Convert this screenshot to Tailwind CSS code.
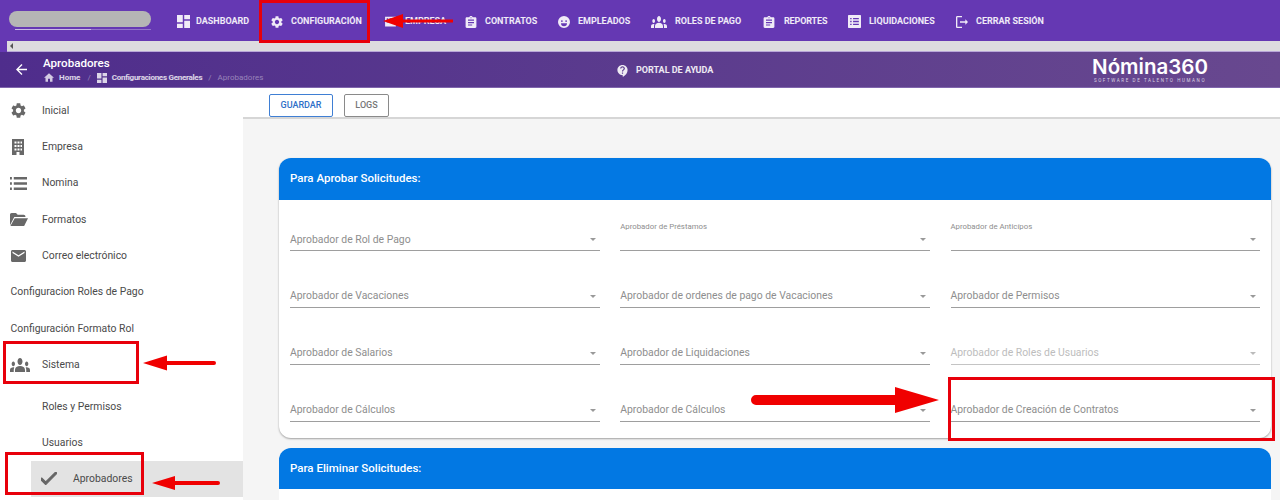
<!DOCTYPE html>
<html lang="es">
<head>
    <meta charset="UTF-8">
    <title>Aprobadores</title>
    <script src="https://cdn.jsdelivr.net/npm/@tailwindcss/browser@4"></script>
</head>
<body class="relative w-[1280px] h-[500px] overflow-hidden bg-white font-['Roboto',sans-serif] text-[#4a4a4a]">

    <!-- top nav -->
    <nav class="flex items-center h-[41px] pt-[2px] bg-[#6538b3] text-white/90 text-[9px] font-bold">
        <div class="w-[177px] pl-[9px] shrink-0 -mt-[2px]">
            <div class="w-[142px] h-[16px] rounded-full bg-[#b5b5b5]"></div>
            <div class="ml-[6px] w-[136px] h-px mt-[2px] bg-white/30"><div class="w-[76px] h-px bg-white/50"></div></div>
        </div>
        <a class="flex items-center gap-[6px] w-[94px] shrink-0"><svg class="w-[13px] h-[13px]" viewBox="3 3 18 18" fill="currentColor"><path d="M3 13h8V3H3v10zm0 8h8v-6H3v6zm10 0h8V11h-8v10zm0-18v6h8V3h-8z"/></svg>DASHBOARD</a>
        <a class="flex items-center gap-[8px] w-[113px] shrink-0"><svg class="w-[12px] h-[12px]" viewBox="2 2 20 20" fill="currentColor"><path d="M19.14 12.94c.04-.3.06-.61.06-.94 0-.32-.02-.64-.07-.94l2.03-1.58c.18-.14.23-.41.12-.61l-1.92-3.32c-.12-.22-.37-.29-.59-.22l-2.39.96c-.5-.38-1.03-.7-1.62-.94l-.36-2.54c-.04-.24-.24-.41-.48-.41h-3.84c-.24 0-.43.17-.47.41l-.36 2.54c-.59.24-1.13.57-1.62.94l-2.39-.96c-.22-.08-.47 0-.59.22L2.74 8.87c-.12.21-.08.47.12.61l2.03 1.58c-.05.3-.09.63-.09.94s.02.64.07.94l-2.03 1.58c-.18.14-.23.41-.12.61l1.92 3.32c.12.22.37.29.59.22l2.39-.96c.5.38 1.03.7 1.62.94l.36 2.54c.05.24.24.41.48.41h3.84c.24 0 .44-.17.47-.41l.36-2.54c.59-.24 1.13-.56 1.62-.94l2.39.96c.22.08.47 0 .59-.22l1.92-3.32c.12-.22.07-.47-.12-.61l-2.01-1.58zM12 15.6c-1.98 0-3.6-1.62-3.6-3.6s1.62-3.6 3.6-3.6 3.6 1.62 3.6 3.6-1.62 3.6-3.6 3.6z"/></svg>CONFIGURACIÓN</a>
        <a class="flex items-center gap-[8px] w-[81px] shrink-0"><svg class="w-[13px] h-[13px]" viewBox="0 0 24 24" fill="currentColor"><path fill-rule="evenodd" d="M2 3h20v18H2V3zm3 3v3h3V6H5zm5 0v3h3V6h-3zm5 0v3h4V6h-4zM5 11v3h3v-3H5zm5 0v3h3v-3h-3zm5 0v3h4v-3h-4z"/></svg>EMPRESA</a>
        <a class="flex items-center gap-[8px] w-[93px] shrink-0"><svg class="w-[12px] h-[12px]" viewBox="3 1 18 20" fill="currentColor"><path d="M19 3h-4.18C14.4 1.84 13.3 1 12 1c-1.3 0-2.4.84-2.82 2H5c-1.1 0-2 .9-2 2v14c0 1.1.9 2 2 2h14c1.1 0 2-.9 2-2V5c0-1.1-.9-2-2-2zm-7 0c.55 0 1 .45 1 1s-.45 1-1 1-1-.45-1-1 .45-1 1-1zm2 14H7v-2h7v2zm3-4H7v-2h10v2zm0-4H7V7h10v2z"/></svg>CONTRATOS</a>
        <a class="flex items-center gap-[8px] w-[93px] shrink-0"><svg class="w-[12px] h-[12px]" viewBox="2 2 20 20" fill="currentColor"><path fill-rule="evenodd" d="M12 2a10 10 0 1 0 0 20 10 10 0 0 0 0-20zM8.500 9a1.500 1.500 0 1 1 0 3 1.500 1.500 0 0 1 0-3zm7 0a1.500 1.500 0 1 1 0 3 1.500 1.500 0 0 1 0-3zM7 14h10a5 5 0 0 1-10 0z"/></svg>EMPLEADOS</a>
        <a class="flex items-center gap-[8px] w-[112px] shrink-0"><svg class="w-[16px] h-[12px]" viewBox="0 6 24 12" preserveAspectRatio="none" fill="currentColor"><path d="M12 12.750c1.630 0 3.070.39 4.240.9 1.080.48 1.760 1.560 1.760 2.730V18H6v-1.610c0-1.180.68-2.260 1.760-2.730 1.170-.52 2.610-.91 4.240-.91zM4 13c1.100 0 2-.9 2-2s-.9-2-2-2-2 .9-2 2 .9 2 2 2zm1.130 1.100c-.37-.06-.74-.1-1.130-.1-.99 0-1.930.21-2.780.58C.48 14.900 0 15.620 0 16.430V18h4.500v-1.610c0-.83.23-1.610.63-2.290zM20 13c1.100 0 2-.9 2-2s-.9-2-2-2-2 .9-2 2 .9 2 2 2zm4 3.430c0-.81-.48-1.530-1.220-1.850-.85-.37-1.790-.58-2.780-.58-.39 0-.76.04-1.130.1.4.68.63 1.460.63 2.290V18H24v-1.570zM12 6c1.660 0 3 1.340 3 3s-1.340 3-3 3-3-1.340-3-3 1.340-3 3-3z"/></svg>ROLES DE PAGO</a>
        <a class="flex items-center gap-[9px] w-[85px] shrink-0"><svg class="w-[12px] h-[12px]" viewBox="3 1 18 20" fill="currentColor"><path d="M19 3h-4.18C14.4 1.84 13.3 1 12 1c-1.3 0-2.4.84-2.82 2H5c-1.1 0-2 .9-2 2v14c0 1.1.9 2 2 2h14c1.1 0 2-.9 2-2V5c0-1.1-.9-2-2-2zm-7 0c.55 0 1 .45 1 1s-.45 1-1 1-1-.45-1-1 .45-1 1-1zm2 14H7v-2h7v2zm3-4H7v-2h10v2zm0-4H7V7h10v2z"/></svg><span class="tracking-[-0.15px]">REPORTES</span></a>
        <a class="flex items-center gap-[8px] w-[108px] shrink-0"><svg class="w-[13px] h-[13px]" viewBox="3 3 18 18" fill="currentColor"><path fill-rule="evenodd" d="M4 3h16a1 1 0 0 1 1 1v16a1 1 0 0 1-1 1H4a1 1 0 0 1-1-1V4a1 1 0 0 1 1-1zm2 4v2h2V7H6zm4 0v2h8V7h-8zm-4 4v2h2v-2H6zm4 0v2h8v-2h-8zm-4 4v2h2v-2H6zm4 0v2h8v-2h-8z"/></svg>LIQUIDACIONES</a>
        <a class="flex items-center gap-[8px] shrink-0"><svg class="w-[12px] h-[12px]" viewBox="3 3 18 18" fill="currentColor"><path d="M5 5h7V3H5c-1.100 0-2 .9-2 2v14c0 1.100.9 2 2 2h7v-2H5V5zm16 7l-4-4v3H9v2h8v3l4-4z"/></svg>CERRAR SESIÓN</a>
    </nav>

    <!-- horizontal scrollbar of the nav -->
    <div class="flex h-[11px] bg-[#6538b3]">
        <div class="ml-[7px] flex-1 flex items-center pl-[3px] bg-[#dddcdf] border-b border-[#b9a7d8]">
            <div class="w-0 h-0 border-y-[3px] border-y-transparent border-r-[3px] border-r-[#555]"></div>
        </div>
    </div>

    <!-- page header -->
    <header class="relative flex items-center h-[36px] bg-gradient-to-r from-[#4f2d8c] to-[#68488f] text-white border-b border-[#8066ad]">
        <svg class="ml-[16px] w-[11px] h-[11px] shrink-0" viewBox="4 4 16 16" fill="currentColor"><path d="M20 11H7.83l5.59-5.59L12 4l-8 8 8 8 1.41-1.41L7.83 13H20v-2z"/></svg>
        <div class="ml-[16px] w-[574px] shrink-0">
            <div class="text-[11.600px] leading-[14px] font-medium">Aprobadores</div>
            <div class="flex items-center text-[8px] leading-[12px] font-bold mt-[2px]">
                <svg class="ml-[1px] w-[10px] h-[9px] mr-[5px] text-white/75" viewBox="2 3 20 17" fill="currentColor"><path d="M10 20v-6h4v6h5v-8h3L12 3 2 12h3v8z"/></svg>
                <span class="text-white/80">Home</span>
                <span class="ml-[7px] mr-[6px] font-normal text-white/40">/</span>
                <svg class="w-[10px] h-[10px] mr-[5px] text-white/80" viewBox="3 3 18 18" fill="currentColor"><path d="M3 13h8V3H3v10zm0 8h8v-6H3v6zm10 0h8V11h-8v10zm0-18v6h8V3h-8z"/></svg>
                <span class="text-white/80 tracking-[-0.27px]">Configuraciones Generales</span>
                <span class="mx-[6px] font-normal text-white/40">/</span>
                <span class="font-normal text-white/40">Aprobadores</span>
            </div>
        </div>
        <div class="flex items-center gap-[8px] pt-[2px] text-[9px] font-bold text-white/90">
            <svg class="w-[11px] h-[12px]" viewBox="3 2 17 20" fill="currentColor"><path d="M11.500 2C6.810 2 3 5.810 3 10.500S6.810 19 11.500 19h.5v3c4.860-2.340 8-7 8-11.500C20 5.810 16.190 2 11.500 2zm1 14.500h-2v-2h2v2zm0-3.500h-2c0-3.250 3-3 3-5 0-1.100-.9-2-2-2s-2 .9-2 2h-2c0-2.210 1.790-4 4-4s4 1.790 4 4c0 2.500-3 2.750-3 5z"/></svg>
            PORTAL DE AYUDA
        </div>
        <div class="ml-auto mr-[72px] w-[116px] text-center">
            <div class="font-['Inter',sans-serif] text-[20.500px] leading-[22px] font-semibold whitespace-nowrap">Nómina360</div>
            <div class="text-[4.500px] leading-[6px] tracking-[1.600px] whitespace-nowrap text-white/75">SOFTWARE DE TALENTO HUMANO</div>
        </div>
    </header>

    <div class="flex h-[412px]">
        <!-- sidebar -->
        <aside class="w-[243px] shrink-0 pt-[4.500px] text-[10.400px]">
            <div class="flex items-center h-[36.300px]"><span class="w-[42px] pl-[11px] shrink-0"><svg class="w-[15px] h-[15px] text-[#686868]" viewBox="2 2 20 20" fill="currentColor"><path d="M19.14 12.94c.04-.3.06-.61.06-.94 0-.32-.02-.64-.07-.94l2.03-1.58c.18-.14.23-.41.12-.61l-1.92-3.32c-.12-.22-.37-.29-.59-.22l-2.39.96c-.5-.38-1.03-.7-1.62-.94l-.36-2.54c-.04-.24-.24-.41-.48-.41h-3.84c-.24 0-.43.17-.47.41l-.36 2.54c-.59.24-1.13.57-1.62.94l-2.39-.96c-.22-.08-.47 0-.59.22L2.74 8.87c-.12.21-.08.47.12.61l2.03 1.58c-.05.3-.09.63-.09.94s.02.64.07.94l-2.03 1.58c-.18.14-.23.41-.12.61l1.92 3.32c.12.22.37.29.59.22l2.39-.96c.5.38 1.03.7 1.62.94l.36 2.54c.05.24.24.41.48.41h3.84c.24 0 .44-.17.47-.41l.36-2.54c.59-.24 1.13-.56 1.62-.94l2.39.96c.22.08.47 0 .59-.22l1.92-3.32c.12-.22.07-.47-.12-.61l-2.01-1.58zM12 15.6c-1.98 0-3.6-1.62-3.6-3.6s1.62-3.6 3.6-3.6 3.6 1.62 3.6 3.6-1.62 3.6-3.6 3.6z"/></svg></span>Inicial</div>
            <div class="flex items-center h-[36.300px]"><span class="w-[42px] pl-[11px] shrink-0"><svg class="w-[14px] h-[16px] text-[#686868]" viewBox="0 0 14 16" fill="currentColor"><path fill-rule="evenodd" d="M1 0h12v16H8.500v-3h-3v3H1V0zm2.500 2.500v2h2v-2h-2zm3 0v2h2v-2h-2zm3 0v2h1.500v-2H9.500zM3.500 6v2h2V6h-2zm3 0v2h2V6h-2zm3 0v2h1.500V6H9.500zM3.500 9.500v2h2v-2h-2zm3 0v2h2v-2h-2zm3 0v2h1.500v-2H9.500z"/></svg></span>Empresa</div>
            <div class="flex items-center h-[36.300px]"><span class="w-[42px] pl-[10px] shrink-0"><svg class="w-[17px] h-[13px] text-[#686868]" viewBox="3 7 18 10" preserveAspectRatio="none" fill="currentColor"><path d="M3 13h2v-2H3v2zm0 4h2v-2H3v2zm0-8h2V7H3v2zm4 4h14v-2H7v2zm0 4h14v-2H7v2zM7 7v2h14V7H7z"/></svg></span>Nomina</div>
            <div class="flex items-center h-[36.300px]"><span class="w-[42px] pl-[10px] shrink-0"><svg class="w-[18px] h-[13px] text-[#686868]" viewBox="2 4 21 16" preserveAspectRatio="none" fill="currentColor"><path d="M2 19V6c0-1 .7-2 2-2h5l2 2h7c1 0 2 1 2 2v1H7l-5 10zm.5 1l5-9.500H23L18.500 20H2.500z"/></svg></span>Formatos</div>
            <div class="flex items-center h-[36.300px]"><span class="w-[42px] pl-[11px] shrink-0"><svg class="w-[15px] h-[12px] text-[#686868]" viewBox="2 4 20 16" preserveAspectRatio="none" fill="currentColor"><path d="M20 4H4c-1.100 0-1.990.9-1.990 2L2 18c0 1.100.9 2 2 2h16c1.100 0 2-.9 2-2V6c0-1.100-.9-2-2-2zm0 4l-8 5-8-5V6l8 5 8-5v2z"/></svg></span>Correo electrónico</div>
            <div class="flex items-center h-[36.300px] pl-[10.500px]">Configuracion Roles de Pago</div>
            <div class="flex items-center h-[36.300px] pl-[10.500px]">Configuración Formato Rol</div>
            <div class="flex items-center h-[36.300px]"><span class="w-[42px] pl-[10px] shrink-0"><svg class="w-[20px] h-[14px] text-[#686868]" viewBox="0 6 24 12" preserveAspectRatio="none" fill="currentColor"><path d="M12 12.750c1.630 0 3.070.39 4.240.9 1.080.48 1.760 1.560 1.760 2.730V18H6v-1.610c0-1.180.68-2.260 1.760-2.730 1.170-.52 2.610-.91 4.240-.91zM4 13c1.100 0 2-.9 2-2s-.9-2-2-2-2 .9-2 2 .9 2 2 2zm1.130 1.100c-.37-.06-.74-.1-1.130-.1-.99 0-1.930.21-2.780.58C.48 14.900 0 15.620 0 16.430V18h4.500v-1.610c0-.83.23-1.610.63-2.290zM20 13c1.100 0 2-.9 2-2s-.9-2-2-2-2 .9-2 2 .9 2 2 2zm4 3.430c0-.81-.48-1.530-1.220-1.850-.85-.37-1.790-.58-2.780-.58-.39 0-.76.04-1.130.1.4.68.63 1.460.63 2.290V18H24v-1.570zM12 6c1.660 0 3 1.340 3 3s-1.340 3-3 3-3-1.340-3-3 1.340-3 3-3z"/></svg></span>Sistema</div>
            <div class="flex items-center h-[36px] mt-[6px] pl-[42px]">Roles y Permisos</div>
            <div class="flex items-center h-[36px] pl-[42px]">Usuarios</div>
            <div class="flex items-center h-[36px] ml-[31px] bg-[#e3e3e3]"><svg class="ml-[10px] w-[16px] h-[13px] text-[#666]" viewBox="4 6 17 13" fill="currentColor"><path d="M9 16.200L4.800 12l-1.400 1.400L9 19 21 7l-1.400-1.400L9 16.200z" stroke="currentColor" stroke-width="1.200"/></svg><span class="ml-[16px]">Aprobadores</span></div>
        </aside>

        <!-- content -->
        <main class="flex-1 flex flex-col min-w-0">
            <div class="flex items-start gap-[11px] h-[35px] pt-[6px] pl-[26px] bg-white border-b-2 border-[#d6d6d6] text-[9px] font-medium">
                <button class="w-[64px] h-[23px] rounded-[2px] border border-[#3f7fd4] text-[#2f6fc8]">GUARDAR</button>
                <button class="w-[45px] h-[23px] rounded-[2px] border border-[#8a8a8a] text-[#777]">LOGS</button>
            </div>
            <div class="flex-1 bg-[#f5f5f5] pt-[39px] pl-[36px] pr-[9px]">
                <section class="rounded-[12px] bg-white shadow-[0_1px_2px_rgba(0,0,0,0.35)]">
                    <h2 class="flex items-center h-[42px] pl-[11px] rounded-t-[12px] bg-[#0278e3] text-white text-[11.500px] font-medium">Para Aprobar Solicitudes:</h2>
                    <div class="grid grid-cols-3 gap-x-[20.750px] grid-rows-[51px_57px_57px_57px] px-[11px] pb-[16px] text-[10.400px] text-[#8e8e8e]">
                        <div class="flex items-end border-b border-[#9e9e9e]"><span class="flex-1 pb-[2px]">Aprobador de Rol de Pago</span><i class="mr-[4px] mb-[9px] border-x-[3.500px] border-t-[3.500px] border-x-transparent border-t-[#999]"></i></div>
                        <div class="flex items-end border-b border-[#9e9e9e] relative"><span class="absolute left-0 top-[22px] text-[7.800px] leading-[9px]">Aprobador de Préstamos</span><span class="flex-1"></span><i class="mr-[4px] mb-[9px] border-x-[3.500px] border-t-[3.500px] border-x-transparent border-t-[#999]"></i></div>
                        <div class="flex items-end border-b border-[#9e9e9e] relative"><span class="absolute left-0 top-[22px] text-[7.800px] leading-[9px]">Aprobador de Anticípos</span><span class="flex-1"></span><i class="mr-[4px] mb-[9px] border-x-[3.500px] border-t-[3.500px] border-x-transparent border-t-[#999]"></i></div>

                        <div class="flex items-end border-b border-[#9e9e9e]"><span class="flex-1 pb-[3px]">Aprobador de Vacaciones</span><i class="mr-[4px] mb-[9px] border-x-[3.500px] border-t-[3.500px] border-x-transparent border-t-[#999]"></i></div>
                        <div class="flex items-end border-b border-[#9e9e9e]"><span class="flex-1 pb-[3px]">Aprobador de ordenes de pago de Vacaciones</span><i class="mr-[4px] mb-[9px] border-x-[3.500px] border-t-[3.500px] border-x-transparent border-t-[#999]"></i></div>
                        <div class="flex items-end border-b border-[#9e9e9e]"><span class="flex-1 pb-[3px]">Aprobador de Permisos</span><i class="mr-[4px] mb-[9px] border-x-[3.500px] border-t-[3.500px] border-x-transparent border-t-[#999]"></i></div>

                        <div class="flex items-end border-b border-[#9e9e9e]"><span class="flex-1 pb-[3px]">Aprobador de Salarios</span><i class="mr-[4px] mb-[9px] border-x-[3.500px] border-t-[3.500px] border-x-transparent border-t-[#999]"></i></div>
                        <div class="flex items-end border-b border-[#9e9e9e]"><span class="flex-1 pb-[3px]">Aprobador de Liquidaciones</span><i class="mr-[4px] mb-[9px] border-x-[3.500px] border-t-[3.500px] border-x-transparent border-t-[#999]"></i></div>
                        <div class="flex items-end border-b border-[#c4c4c4] text-[#bdbdbd]"><span class="flex-1 pb-[3px]">Aprobador de Roles de Usuarios</span><i class="mr-[4px] mb-[9px] border-x-[3.500px] border-t-[3.500px] border-x-transparent border-t-[#bbb]"></i></div>

                        <div class="flex items-end border-b border-[#9e9e9e]"><span class="flex-1 pb-[3px]">Aprobador de Cálculos</span><i class="mr-[4px] mb-[9px] border-x-[3.500px] border-t-[3.500px] border-x-transparent border-t-[#999]"></i></div>
                        <div class="flex items-end border-b border-[#9e9e9e]"><span class="flex-1 pb-[3px]">Aprobador de Cálculos</span><i class="mr-[4px] mb-[9px] border-x-[3.500px] border-t-[3.500px] border-x-transparent border-t-[#999]"></i></div>
                        <div class="flex items-end border-b border-[#9e9e9e]"><span class="flex-1 pb-[3px]">Aprobador de Creación de Contratos</span><i class="mr-[4px] mb-[9px] border-x-[3.500px] border-t-[3.500px] border-x-transparent border-t-[#999]"></i></div>
                    </div>
                </section>
                <section class="mt-[10px] rounded-t-[12px] bg-white h-[52px]">
                    <h2 class="flex items-center h-[41px] pl-[11px] rounded-t-[12px] bg-[#0278e3] text-white text-[11.500px] font-medium">Para Eliminar Solicitudes:</h2>
                </section>
            </div>
        </main>
    </div>

    <!-- red annotations drawn on top of the screenshot -->
    <svg class="absolute inset-0 w-[1280px] h-[500px] pointer-events-none" viewBox="0 0 1280 500" fill="none">
        <g stroke="#e8000b" stroke-width="3">
            <rect x="260.500" y="1.500" width="108" height="40"/>
            <rect x="4.500" y="342.500" width="133" height="40"/>
            <rect x="6.500" y="453.500" width="136" height="40"/>
            <rect x="949.500" y="378.500" width="324" height="61"/>
        </g>
        <g fill="#f00000">
            <path d="M383 21l20-7v5.500h50v3h-50V28z"/>
            <path d="M143 363l24-7.500V361h47a2 2 0 0 1 0 4h-47v5.500z"/>
            <path d="M152 483l23-7v5h43a2 2 0 0 1 0 4h-43v5z"/>
            <path d="M939 400l-44-13v8H756a5 5 0 0 0 0 10h139v8z"/>
        </g>
    </svg>
</body>
</html>
